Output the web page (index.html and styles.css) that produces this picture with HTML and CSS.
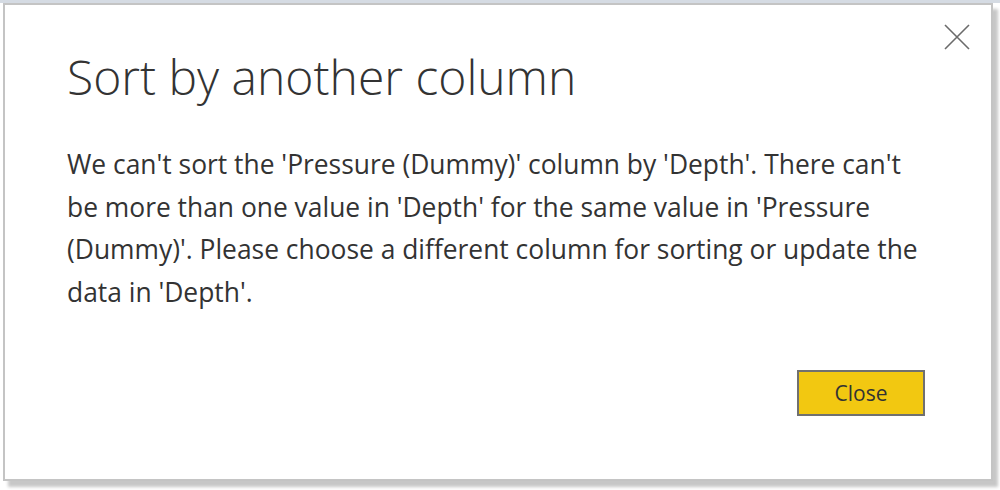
FILE: index.html
```html
<!DOCTYPE html>
<html>
<head>
<meta charset="utf-8">
<link rel="stylesheet" href="styles.css">
</head>
<body>
<div class="topstrip"></div>
<div class="dialog">
  <button class="close-x" aria-label="Close">
    <svg width="26" height="26" viewBox="0 0 26 26"><path d="M1 1 L25 25 M25 1 L1 25" stroke="#6b6b6b" stroke-width="1.6" fill="none"/></svg>
  </button>
  <h1 class="title">Sort by another column</h1>
  <p class="message">We can't sort the 'Pressure (Dummy)' column by 'Depth'. There can't be more than one value in 'Depth' for the same value in 'Pressure (Dummy)'. Please choose a different column for sorting or update the data in 'Depth'.</p>
  <div class="actions">
    <button class="btn-close">Close</button>
  </div>
</div>
</body>
</html>
```
FILE: styles.css
```css
html, body {
  margin: 0;
  padding: 0;
  background: #ffffff;
}
body {
  width: 1000px;
  height: 490px;
  overflow: hidden;
  font-family: "Open Sans", "Noto Sans", sans-serif;
  color: #333333;
}
.topstrip {
  height: 3px;
  background: #d5dbe3;
}
.dialog {
  position: relative;
  box-sizing: border-box;
  margin-left: 3px;
  width: 990px;
  height: 478px;
  border: 2px solid #c4c4c4;
  background: #ffffff;
  box-shadow: 5px 6px 3px rgba(0, 0, 0, 0.22);
  display: flex;
  flex-direction: column;
  padding: 0 64px 0 62px;
}
.close-x {
  position: absolute;
  top: 19px;
  right: 21px;
  width: 26px;
  height: 26px;
  padding: 0;
  border: 0;
  background: none;
}
.close-x svg { display: block; }
.title {
  margin: 41px 0 0 0;
  font-weight: 300;
  font-size: 48px;
  line-height: 62px;
  color: #333333;
}
.message {
  margin: 35px 0 0 0;
  font-size: 26.4px;
  line-height: 42.5px;
  color: #333333;
}
.actions {
  display: flex;
  justify-content: flex-end;
  margin-top: auto;
  margin-bottom: 63px;
  margin-right: 2px;
}
.btn-close {
  box-sizing: border-box;
  width: 128px;
  height: 46px;
  background: #f2c811;
  border: 2px solid #707070;
  font-family: "Open Sans", "Noto Sans", sans-serif;
  font-size: 21px;
  color: #333333;
  padding: 0;
}
```
